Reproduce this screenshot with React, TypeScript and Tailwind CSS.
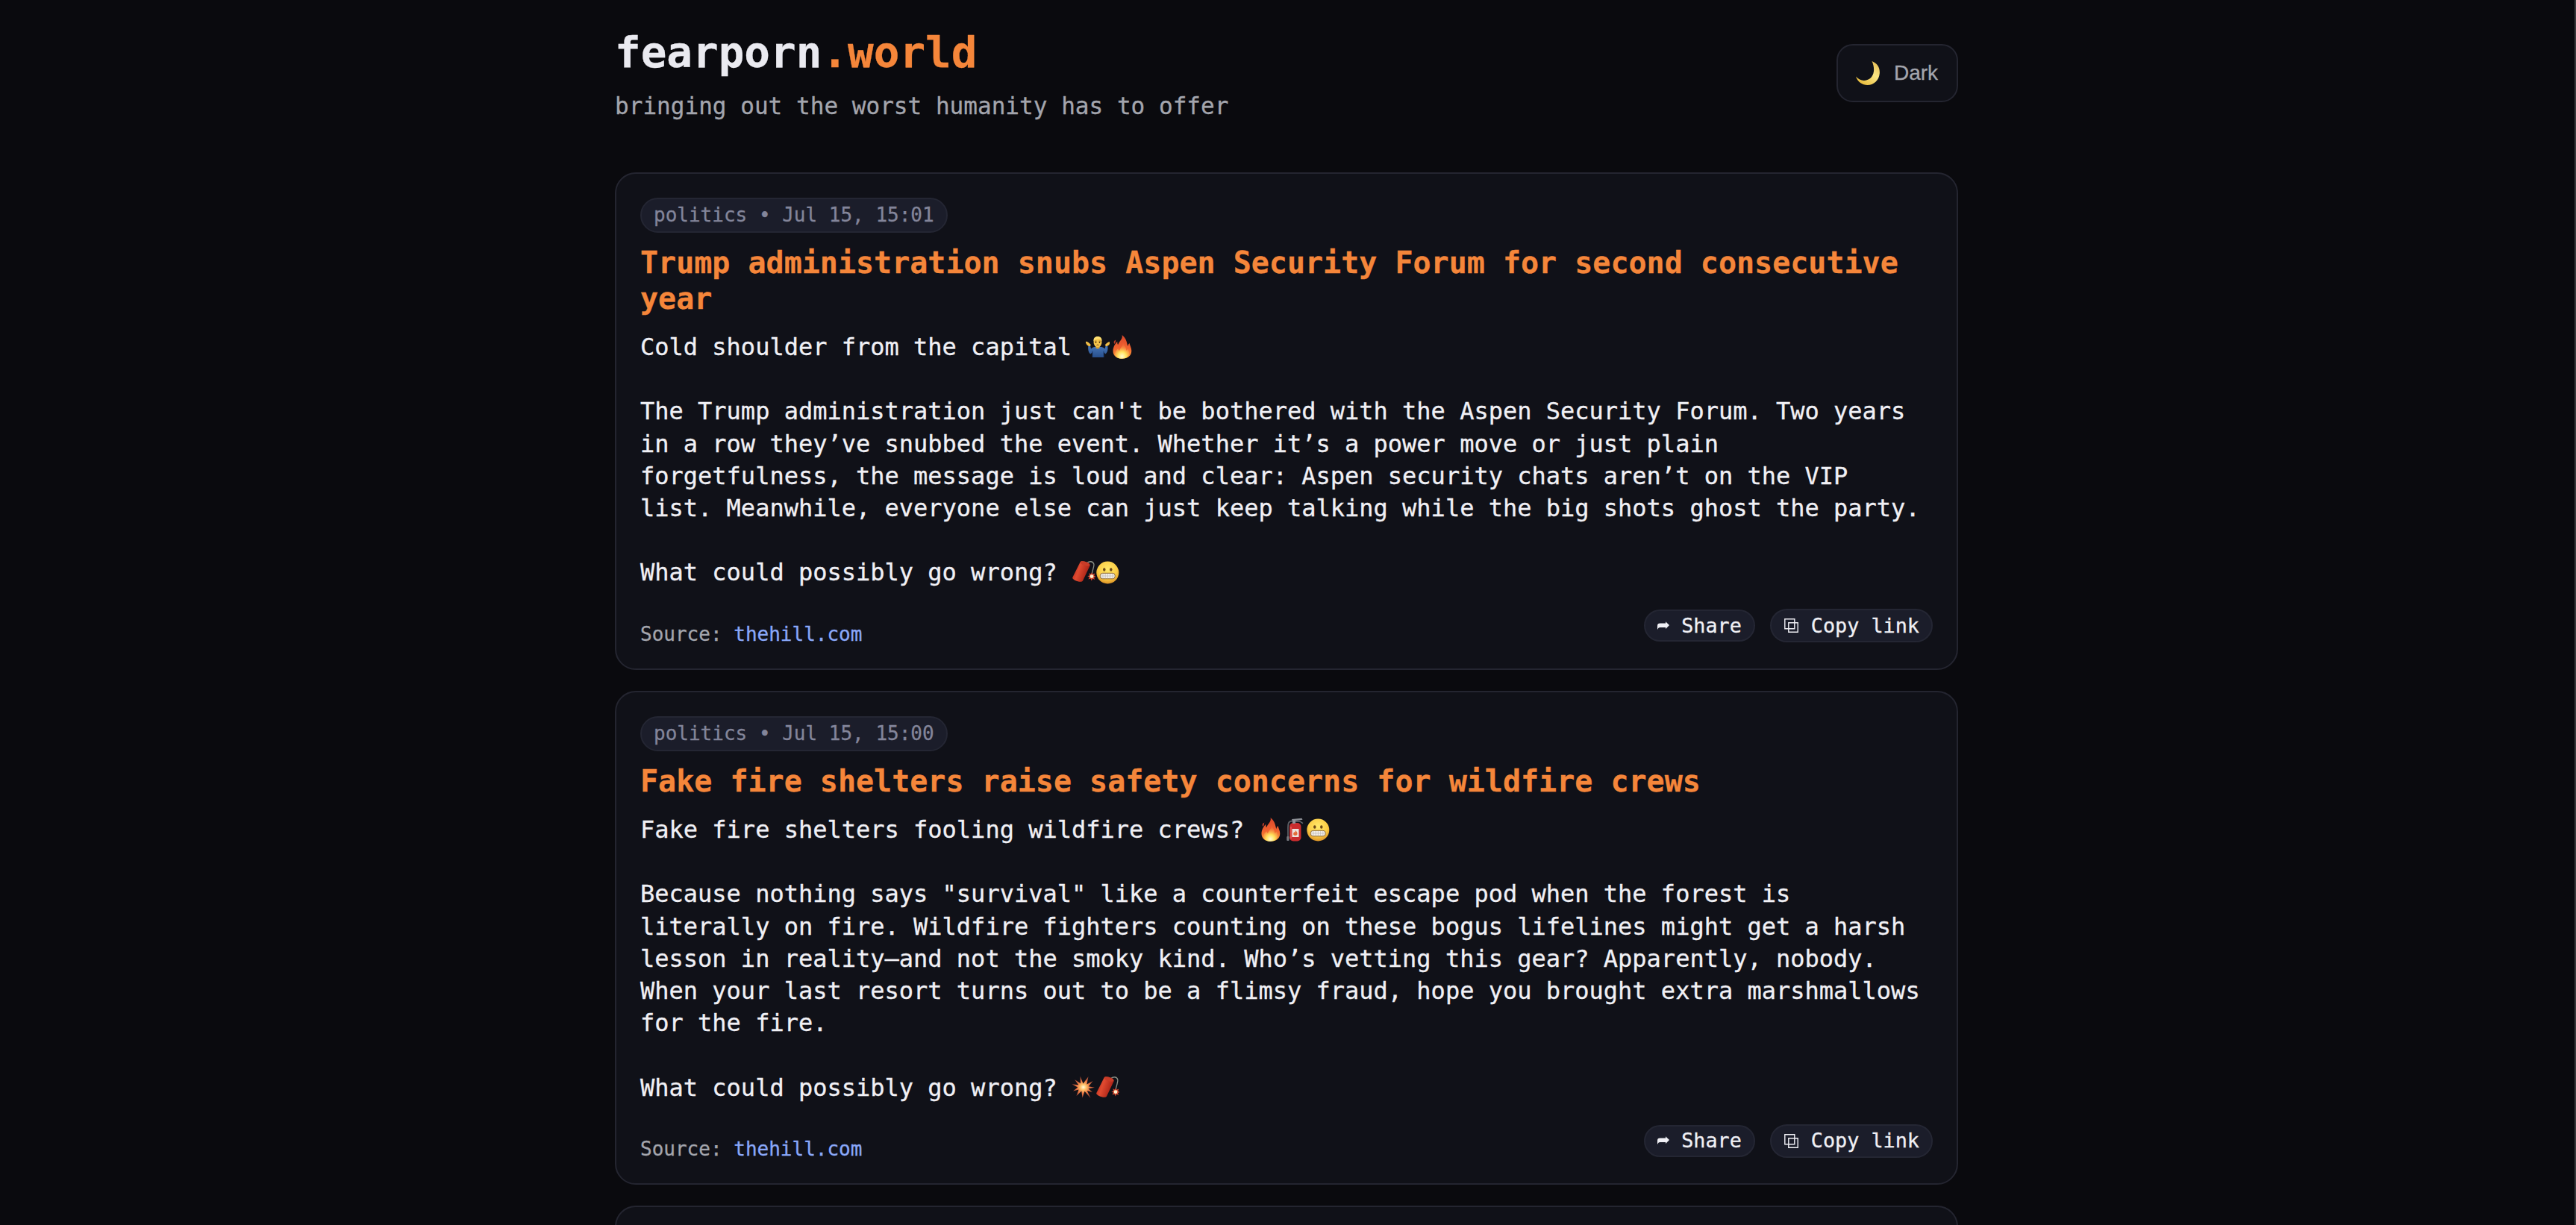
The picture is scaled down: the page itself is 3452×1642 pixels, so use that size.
import type { ReactNode } from "react";
import clsx from "clsx";

function Emoji({ label, children }: { label: string; children: ReactNode }) {
  return (
    <svg
      role="img"
      aria-label={label}
      viewBox="0 0 32 32"
      className="inline-block size-8 align-[-5px]"
    >
      {children}
    </svg>
  );
}

function Gradients() {
  return (
    <svg className="absolute size-0" aria-hidden="true">
      <defs>
        <linearGradient id="flame" x1="0" y1="0" x2="0" y2="1">
          <stop offset="0" stopColor="#d9472b" />
          <stop offset="0.55" stopColor="#f0622f" />
          <stop offset="1" stopColor="#fba43a" />
        </linearGradient>
        <radialGradient id="flameCore" cx="0.5" cy="0.85" r="0.75">
          <stop offset="0" stopColor="#fffbd0" />
          <stop offset="0.4" stopColor="#ffe05a" />
          <stop offset="1" stopColor="#f4703a" stopOpacity="0.4" />
        </radialGradient>
        <radialGradient id="face" cx="0.5" cy="0.35" r="0.65">
          <stop offset="0" stopColor="#ffe96b" />
          <stop offset="0.65" stopColor="#fbcc45" />
          <stop offset="1" stopColor="#dc9326" />
        </radialGradient>
        <linearGradient id="stick" x1="0" y1="0" x2="1" y2="0.4">
          <stop offset="0" stopColor="#a82316" />
          <stop offset="0.45" stopColor="#e04a30" />
          <stop offset="1" stopColor="#a51f14" />
        </linearGradient>
        <radialGradient id="spark">
          <stop offset="0" stopColor="#fffbe0" />
          <stop offset="0.25" stopColor="#ffc56b" />
          <stop offset="0.55" stopColor="#e97845" />
          <stop offset="1" stopColor="#a84a36" />
        </radialGradient>
        <linearGradient id="sweater" x1="0" y1="0" x2="0" y2="1">
          <stop offset="0" stopColor="#4676b8" />
          <stop offset="1" stopColor="#284f8c" />
        </linearGradient>
        <linearGradient id="moon" x1="1" y1="0" x2="0.3" y2="1">
          <stop offset="0" stopColor="#e3b64a" />
          <stop offset="0.5" stopColor="#fbe583" />
          <stop offset="1" stopColor="#e9bd3d" />
        </linearGradient>
      </defs>
    </svg>
  );
}

function Fire() {
  return (
    <Emoji label="fire">
      <path
        d="M16.500 0c1.800 4.800-3.500 8-5.300 13-.9-.9-1-2.500-.9-4.200C7 12 4.500 17 4.500 21.500c0 6.200 5 10.300 12.200 10.300s12.600-4 12.600-10.500c0-4.200-2-6.800-2.800-10.300-1.400 1.200-1.900 3-2.200 4.300C23 9 21.500 3.500 16.500 0Z"
        fill="url(#flame)"
      />
      <path d="M6.300 12c-1.300-2.300-.8-4.300 2-5.500-.7 2.200.3 3.300-2 5.500Z" fill="#b83c2a" />
      <path
        d="M17.500 11c.8 3.500-3.200 6-4.500 10-1-.6-1.500-1.500-1.600-2.800C8.500 20.500 7 23 7 25.500c0 4 4.500 6.300 9.700 6.300s9.500-2.800 9.500-7c0-2.300-1-4.200-1.800-6.300-.6 1.300-1.400 2-2.200 2.300-.3-3.800-1.700-7.300-4.700-9.800Z"
        fill="url(#flameCore)"
      />
    </Emoji>
  );
}

function Grimace() {
  return (
    <Emoji label="grimacing face">
      <circle cx="16.300" cy="16.500" r="15" fill="url(#face)" />
      <ellipse cx="11.800" cy="12.500" rx="1.700" ry="2.200" fill="#6b4715" />
      <ellipse cx="20.800" cy="12.500" rx="1.700" ry="2.200" fill="#6b4715" />
      <rect x="6.300" y="17.300" width="20" height="7.500" rx="3.400" fill="#f3efe9" stroke="#8d6931" strokeWidth="1" />
      <path d="M7 21h18.600M10 18v6.500M13.200 18v6.500M16.400 18v6.500M19.600 18v6.500M22.800 18v6.500" stroke="#b9b2ad" strokeWidth="0.6" />
    </Emoji>
  );
}

function Firecracker() {
  return (
    <Emoji label="firecracker">
      <path d="M20 4.500c3-4 8.500-3.500 9.800.5.900 3.500-2 7-2.500 14" fill="none" stroke="#8b9187" strokeWidth="1.300" />
      <path d="M11.500 2.500c1-3.500 14 .8 13.200 4.500L15 27.500c-2 3.500-15-1-13.700-4.500Z" fill="url(#stick)" />
      <ellipse cx="18.200" cy="4.500" rx="6.500" ry="2.700" transform="rotate(17 18.200 4.500)" fill="#c93c28" />
      <path
        d="m27 16 1.300 2.800 3-1.300-1.200 3 2.800 1.300-2.900 1.200 1 3-2.800-1.400-1.500 2.800-1.200-3-3 1 1.400-2.900-2.600-1.300 3-1-1-2.900 2.700 1.300Z"
        fill="#d94b31"
      />
      <circle cx="27" cy="21.600" r="2.400" fill="#fff1cc" />
    </Emoji>
  );
}

function Shrug() {
  return (
    <Emoji label="person shrugging">
      <path d="M6 14.500 3.300 15c-.5 4.500.5 9.500 3.200 10.500l2.500-2.500V30h15v-7l2.300 2.500c2.700-1.500 3.700-6 3-10.500l-2.800-.5-.8 4c-2-2-4.700-3-9.500-3s-7.200 1-9.200 3Z" fill="url(#sweater)" />
      <path d="M9 21.500V30M24 21.500V30" stroke="#1e3c70" strokeWidth="0.900" />
      <path d="M-.3 8.800c2.500 0 5 1.500 7.300 4.700l-1.800 1.800C2.500 14.800 0 12.500-.3 8.800ZM33 8.800c-2.500 0-5 1.500-7.300 4.700l1.800 1.800c2.700-.5 5.200-2.800 5.500-6.500Z" fill="#f0bd48" />
      <path d="M13.500 14h5v3.500c-1.500 1.300-3.500 1.300-5 0Z" fill="#d79c30" />
      <ellipse cx="16" cy="9.800" rx="5.500" ry="6.500" fill="#f6c54a" />
      <path d="M10.500 9C10 4.300 12 2 16 2c4 0 6 2.500 5.500 6.500-.8-2-2-3-3.500-3.200-2.500.7-6.200 0-7.500 3.700Z" fill="#ffe072" />
      <path d="M12 8.200h2.500M17.500 8.200H20" stroke="#95691e" strokeWidth="0.900" />
      <circle cx="13.500" cy="10" r="0.900" fill="#513311" />
      <circle cx="18.500" cy="10" r="0.900" fill="#513311" />
      <path d="M14.500 13.800c.8-.8 2.200-.8 3 0" stroke="#7e4519" strokeWidth="1" fill="none" />
    </Emoji>
  );
}

function Extinguisher() {
  return (
    <Emoji label="fire extinguisher">
      <path d="M14 4.500C8.500 4.500 8 8 8 13v14.500" fill="none" stroke="#5c5e64" strokeWidth="1.800" />
      <rect x="6.300" y="25" width="3.200" height="6" rx="1" fill="#77797e" />
      <rect x="10" y="7" width="15.500" height="24.500" rx="5" fill="#c92c2d" />
      <path d="M12 12v16" stroke="#ed6a60" strokeWidth="1.200" />
      <path d="M13 2 26.500.8l1 2-9.500 1.400V8h-4V5Z" fill="#8d9096" />
      <path d="m18 5.500 5.500-.8 4.500 3" fill="none" stroke="#66696f" strokeWidth="1.500" />
      <rect x="13.500" y="15" width="9" height="11" fill="#ece5df" />
      <path d="M17.800 17c2 1.800 3.200 3.200 2.700 5.200-.5 2.300-5 2.300-5.300 0-.2-1.500.7-2.200 1.300-3.100l.7 1c.6-1 .7-1.800.6-3.100Z" fill="#e46b37" />
    </Emoji>
  );
}

function Boom() {
  return (
    <Emoji label="collision">
      <path
        d="m11.500.500 4 10L22.500 1l-2.200 10.500L28.500 7l-5.800 7.200 8.300 1.500-8.500 1.500 5.500 4.800-7.200-2L25.500 30l-8-9.300-3 8.800-1.200-9L6.500 27l3-8.500L2 20.500l6.200-5L.5 11.300l8.800 1L4 5l8 5.300Z"
        fill="url(#spark)"
      />
    </Emoji>
  );
}

function ShareIcon() {
  return (
    <svg viewBox="0 0 16 12" className="h-3 w-4" fill="#f0f0f5" aria-hidden="true">
      <path d="M0 11V6C0 3.500 1 2.500 3.500 2.500H11V.3l5 4.700-5 4.900V7.900H3.500C1.800 7.900 1 9 0 11Z" />
    </svg>
  );
}

function CopyIcon() {
  return (
    <svg viewBox="0 0 19 19" className="size-[19px]" fill="none" stroke="#f0f0f5" strokeWidth="1.400" aria-hidden="true">
      <path d="M.8.8h13v13H.8ZM5.800 5.800h12.400v12.400H5.800Z" />
    </svg>
  );
}

type Post = {
  tag: string;
  title: string;
  intro: string;
  introEmoji: ReactNode;
  body: string;
  outroEmoji: ReactNode;
};

const POSTS: Post[] = [
  {
    tag: "politics • Jul 15, 15:01",
    title: "Trump administration snubs Aspen Security Forum for second consecutive year",
    intro: "Cold shoulder from the capital ",
    introEmoji: <><Shrug /><Fire /></>,
    body: "The Trump administration just can't be bothered with the Aspen Security Forum. Two years in a row they’ve snubbed the event. Whether it’s a power move or just plain forgetfulness, the message is loud and clear: Aspen security chats aren’t on the VIP list. Meanwhile, everyone else can just keep talking while the big shots ghost the party.",
    outroEmoji: <><Firecracker /><Grimace /></>,
  },
  {
    tag: "politics • Jul 15, 15:00",
    title: "Fake fire shelters raise safety concerns for wildfire crews",
    intro: "Fake fire shelters fooling wildfire crews? ",
    introEmoji: <><Fire /><Extinguisher /><Grimace /></>,
    body: "Because nothing says \"survival\" like a counterfeit escape pod when the forest is literally on fire. Wildfire fighters counting on these bogus lifelines might get a harsh lesson in reality—and not the smoky kind. Who’s vetting this gear? Apparently, nobody. When your last resort turns out to be a flimsy fraud, hope you brought extra marshmallows for the fire.",
    outroEmoji: <><Boom /><Firecracker /></>,
  },
];

const CARD = "rounded-[28px] border-2 border-[#242530] bg-[#101118]";

function PillButton({ icon, label, className }: { icon: ReactNode; label: string; className?: string }) {
  return (
    <button
      className={clsx(
        "flex items-center rounded-full border-2 border-[#242633] bg-[#1b1d2a] text-[26.8px] leading-none text-[#f0f0f5]",
        className,
      )}
    >
      {icon}
      {label}
    </button>
  );
}

function PostCard({ post }: { post: Post }) {
  return (
    <article className={clsx(CARD, "px-8 pt-8 pb-[34px]")}>
      <div className="flex">
        <span className="rounded-full border-2 border-[#242633] bg-[#1b1d2a] px-4 py-1.5 text-[26px] leading-[31px] text-[#83859a]">
          {post.tag}
        </span>
      </div>
      <h2 className="mt-4 text-[40px] leading-[48px] font-bold text-[#f5863a]">{post.title}</h2>
      <div className="mt-5 text-[32px] leading-[43.2px] text-[#f0f0f5]">
        <p className="h-[43.2px]">{post.intro}{post.introEmoji}</p>
        <p className="mt-[43.2px]">{post.body}</p>
        <p className="mt-[43.2px] h-[43.2px]">What could possibly go wrong? {post.outroEmoji}</p>
      </div>
      <footer className="mt-[26.400px] flex h-[46px] items-center justify-between">
        <p className="pt-[22px] text-[26px] leading-[30px] text-[#a3a5ad]">
          Source: <a className="text-[#8aa8f8]">thehill.com</a>
        </p>
        <div className="flex items-center gap-5">
          <PillButton
            icon={<ShareIcon />}
            label="Share"
            className="h-[43px] gap-4 pr-4 pl-4"
          />
          <PillButton
            icon={<CopyIcon />}
            label="Copy link"
            className="h-[45px] gap-[17px] pr-4 pl-[17px]"
          />
        </div>
      </footer>
    </article>
  );
}

export default function App() {
  return (
    <div className="h-[1642px] overflow-hidden border-r-2 border-[#3a3a3c] bg-[#0a0a0e] font-['DejaVu_Sans_Mono',monospace] [-webkit-text-stroke:0.3px]">
      <Gradients />
      <div className="ml-[824px] w-[1800px]">
        <header className="flex items-start justify-between pt-[37px]">
          <div>
            <h1 className="text-[57.6px] leading-[67px] font-bold text-[#eaeaf0]">
              fearporn<span className="text-[#f5863a]">.world</span>
            </h1>
            <p className="mt-5 text-[31.05px] leading-9 text-[#a3a5ad]">
              bringing out the worst humanity has to offer
            </p>
          </div>
          <button className="mt-[22px] flex h-[78px] w-[163px] items-center gap-[19px] rounded-[22px] border-2 border-[#242530] bg-[#101118] pl-6 font-['Liberation_Sans',sans-serif] text-[28px] text-[#a3a5ad]">
            <svg viewBox="0 0 32 32" className="size-8" aria-hidden="true">
              <path d="M21.500 0C29 3 32.500 9 31.800 16.500 30.800 26 24 32 15.500 32 8.500 32 2.500 28 0 20.500c5 6 12.500 7 18.500 3S26 9.500 21.500 0Z" fill="url(#moon)" />
            </svg>
            Dark
          </button>
        </header>
        <main className="mt-[71px] flex flex-col gap-7">
          {POSTS.map((post) => (
            <PostCard key={post.tag} post={post} />
          ))}
          <div className={clsx(CARD, "h-[600px]")} />
        </main>
      </div>
    </div>
  );
}
